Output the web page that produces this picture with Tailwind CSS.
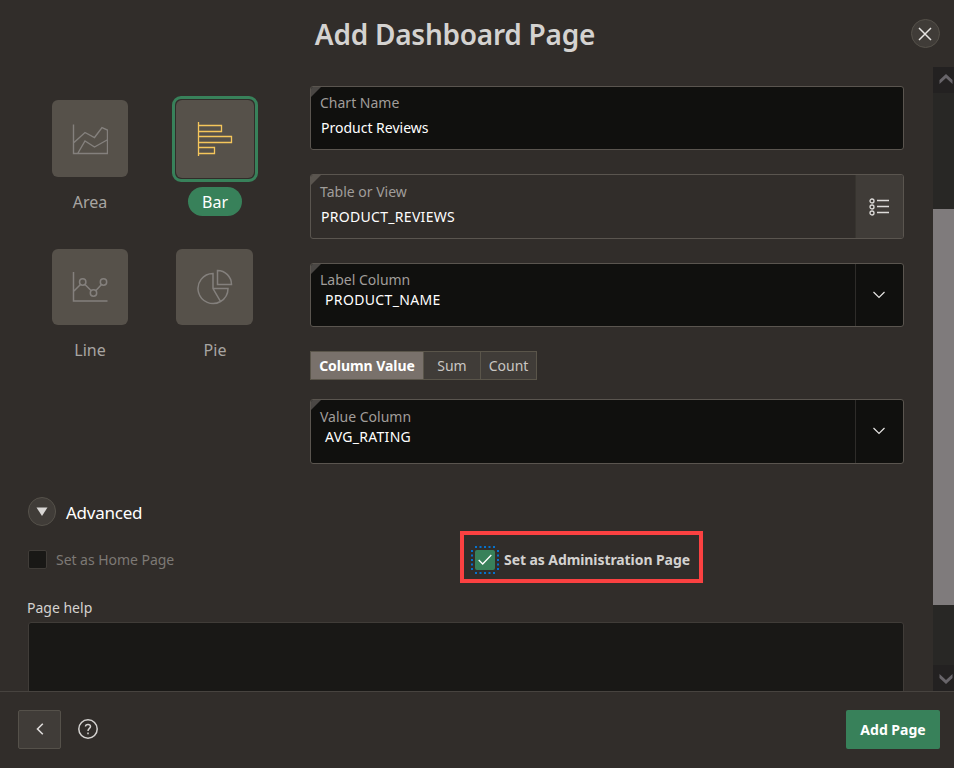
<!DOCTYPE html>
<html lang="en">
<head>
<meta charset="utf-8">
<title>Add Dashboard Page</title>
<script src="https://cdn.jsdelivr.net/npm/@tailwindcss/browser@4"></script>
</head>
<body class="w-[954px] h-[768px] overflow-hidden flex flex-col bg-[#312d2a] font-['Noto_Sans','Open_Sans',sans-serif] text-[14px] text-[#d4d2d0]">
<header class="h-[67px] shrink-0 relative flex justify-center pt-[14px] pr-[44px]">
  <h1 class="text-[28px] leading-[41px] font-semibold tracking-[-0.25px] text-[#d4d2d0] whitespace-nowrap">Add Dashboard Page</h1>
  <button class="absolute left-[911px] top-[19px] w-[29px] h-[29px] rounded-full border border-[#55514a] bg-[#403c38] flex items-center justify-center pr-px">
    <svg width="14" height="14" viewBox="0 0 14 14" fill="none" stroke="#e6e4e2" stroke-width="1.5"><path d="M1 1L13 13M13 1L1 13"/></svg>
  </button>
</header>
<div class="h-[624px] shrink-0 flex">
  <main class="w-[933px] overflow-hidden">
    <div class="flex pt-[19px] h-[397px]">
      <section class="w-[310px] shrink-0 pl-[48px] pt-[10px] grid grid-cols-[84px_86px] gap-x-[40px] auto-rows-[148.5px] content-start text-[16px] text-[#a8a5a2]">
        <div class="flex flex-col items-center">
          <div class="mt-[4px] w-[76px] h-[77px] rounded-[6px] bg-[#56514a] flex items-center justify-center">
            <svg width="36" height="36" viewBox="0 0 36 36" fill="none" stroke="#84807d" stroke-width="1.4"><path d="M1.5 3.500V32.500H35.500V9L30 6.500L22.500 16.500L13 11.500L2 21.500M6 32L13 20L22.500 26L35 19"/></svg>
          </div>
          <span class="mt-[11px] leading-[29px]">Area</span>
        </div>
        <div class="flex flex-col items-center">
          <div class="w-[86px] h-[86px] rounded-[9px] border-[3px] border-[#38815a] p-px flex">
            <div class="flex-1 rounded-[6px] bg-[#56514a] flex items-center justify-center">
              <svg width="36" height="36" viewBox="0 0 36 36" fill="none" stroke="#f5c65b" stroke-width="1.3"><path d="M1.500 1V35M1.500 4.500H24.500V10.500H1.500M1.500 15.500H34.500V21.500H1.500M1.500 26.500H17.500V32.500H1.500"/></svg>
            </div>
          </div>
          <span class="mt-[5px] w-[54px] h-[29px] leading-[30px] rounded-full bg-[#38815a] text-white text-center">Bar</span>
        </div>
        <div class="flex flex-col items-center">
          <div class="mt-[4px] w-[76px] h-[76px] rounded-[6px] bg-[#56514a] flex items-center justify-center">
            <svg width="36" height="36" viewBox="0 0 36 36" fill="none" stroke="#84807d" stroke-width="1.5"><path d="M1.500 3V32H35.500M2 22L8.500 15.500M13 15.500L19.500 22M23.500 22L29.500 15.500"/><circle cx="10.700" cy="13" r="3.200"/><circle cx="21.500" cy="24" r="3.200"/><circle cx="31.500" cy="13" r="3.200"/></svg>
          </div>
          <span class="mt-[11px] leading-[29px]">Line</span>
        </div>
        <div class="flex flex-col items-center">
          <div class="mt-[4px] mr-px w-[77px] h-[76px] rounded-[6px] bg-[#56514a] flex items-center justify-center">
            <svg width="36" height="36" viewBox="0 0 36 36" fill="none" stroke="#84807d" stroke-width="1.5"><path d="M16 4.500A15 15 0 1 0 23.500 32.500L16 19.500ZM16 19.500H31A15 15 0 0 1 23.500 32.500M20.500 1.500V15.500H34.500A14 14 0 0 0 20.500 1.500Z"/></svg>
          </div>
          <span class="mt-[11px] leading-[29px]">Pie</span>
        </div>
      </section>
      <section class="w-[594px] shrink-0 flex flex-col">
        <div class="h-[64px] rounded-[3px] border border-[#5a554f] bg-[#10100e] relative overflow-hidden pl-[9px] pt-[6px]">
          <i class="absolute left-0 top-0 border-t-[10px] border-r-[10px] border-t-[#4a4744] border-r-transparent"></i>
          <div class="leading-[20px] text-[#a09d9a]">Chart Name</div>
          <div class="mt-[5px] leading-[19px] pl-px text-white">Product Reviews</div>
        </div>
        <div class="mt-[24px] h-[65px] rounded-[3px] border border-[#5a554f] relative overflow-hidden flex">
          <i class="absolute left-0 top-0 border-t-[10px] border-r-[10px] border-t-[#5a554f] border-r-transparent"></i>
          <div class="flex-1 pl-[9px] pt-[7px]">
            <div class="leading-[20px] text-[#a09d9a]">Table or View</div>
            <div class="mt-[5px] leading-[19px] pl-px tracking-[0.3px] text-white">PRODUCT_REVIEWS</div>
          </div>
          <div class="w-[48px] bg-[#403c38] border-l border-[#37342f] flex items-center justify-center pr-px">
            <svg width="22" height="20" viewBox="0 0 22 20" fill="none" stroke="#dddbd9" stroke-width="1.300"><circle cx="4" cy="4" r="2"/><circle cx="4" cy="10" r="2"/><circle cx="4" cy="16" r="2"/><path d="M9 3.500H21M9 9.500H21M9 15.500H21"/></svg>
          </div>
        </div>
        <div class="mt-[24px] h-[64px] rounded-[3px] border border-[#5a554f] bg-[#10100e] relative overflow-hidden flex">
          <i class="absolute left-0 top-0 border-t-[10px] border-r-[10px] border-t-[#4a4744] border-r-transparent"></i>
          <div class="flex-1 pl-[9px] pt-[6px]">
            <div class="leading-[20px] text-[#a09d9a]">Label Column</div>
            <div class="leading-[20px] pl-[5px] tracking-[0.35px] text-white">PRODUCT_NAME</div>
          </div>
          <div class="w-[48px] border-l border-[#2e2c29] flex items-center justify-center pr-px">
            <svg width="14" height="8" viewBox="0 0 14 8" fill="none" stroke="#e6e4e2" stroke-width="1.200"><path d="M1.500 1L7 6.500L12.500 1"/></svg>
          </div>
        </div>
        <div class="mt-[24px] h-[29px] w-[227px] flex border border-[#5a554a] bg-[#403c38] leading-[28px] text-center text-[#c9c6c3]">
          <div class="w-[112px] bg-[#79716b] font-bold tracking-[-0.05px] text-white">Column Value</div>
          <div class="w-[57px] border-l border-[#5a554a]">Sum</div>
          <div class="w-[56px] border-l border-[#5a554a]">Count</div>
        </div>
        <div class="mt-[19px] h-[65px] rounded-[3px] border border-[#5a554f] bg-[#10100e] relative overflow-hidden flex">
          <i class="absolute left-0 top-0 border-t-[10px] border-r-[10px] border-t-[#4a4744] border-r-transparent"></i>
          <div class="flex-1 pl-[9px] pt-[7px]">
            <div class="leading-[20px] text-[#a09d9a]">Value Column</div>
            <div class="leading-[20px] pl-[5px] tracking-[0.3px] text-white">AVG_RATING</div>
          </div>
          <div class="w-[48px] border-l border-[#2e2c29] flex items-center justify-center pr-px pb-px">
            <svg width="14" height="8" viewBox="0 0 14 8" fill="none" stroke="#e6e4e2" stroke-width="1.200"><path d="M1.500 1L7 6.500L12.500 1"/></svg>
          </div>
        </div>
      </section>
    </div>
    <div class="mt-[33px] ml-[28px] h-[29px] flex items-center">
      <button class="w-[28px] h-[29px] rounded-full border border-[#55514a] bg-[#403c38] flex items-center justify-center">
        <svg width="12" height="9" viewBox="0 0 12 9" fill="#d8d6d4"><path d="M0.500 0.500H11.500L6 9Z"/></svg>
      </button>
      <span class="ml-[10px] pt-[2px] text-[17px] leading-[29px] tracking-[-0.25px] text-white">Advanced</span>
    </div>
    <div class="ml-[28px] mt-[5px] h-[52px] flex items-center">
      <div class="w-[432px] flex items-center pt-[4px]">
        <span class="w-[19px] h-[19px] rounded-[2px] border border-[#403c38] bg-[#191816]"></span>
        <span class="ml-[9px] pt-[2px] leading-[20px] tracking-[-0.04px] text-[#7d7975]">Set as Home Page</span>
      </div>
      <div class="w-[243px] h-[52px] border-4 border-[#fb4141] flex items-center pl-[7px] pt-[5px]">
        <span class="w-[28px] h-[28px] relative flex items-center justify-center">
          <svg class="absolute inset-0" width="28" height="28" viewBox="0 0 28 28" fill="none" stroke="#0572ce" stroke-width="2" stroke-dasharray="2 2.500"><path d="M4 1H25M27 4V25M4 27H25M1 4V25"/></svg>
          <span class="w-[20px] h-[20px] rounded-[2px] bg-[#38815a] flex items-center justify-center">
            <svg width="14" height="11" viewBox="0 0 14 11" fill="none" stroke="#fff" stroke-width="1.300"><path d="M0.700 6L4.700 10L13.300 1"/></svg>
          </span>
        </span>
        <span class="ml-[5px] pt-px leading-[20px] font-bold tracking-[-0.08px] whitespace-nowrap">Set as Administration Page</span>
      </div>
    </div>
    <div class="ml-[27px] mt-[15px] h-[24px] leading-[20px]">Page help</div>
    <div class="ml-[28px] w-[876px] h-[100px] rounded-[3px] border border-[#403c38] bg-[#191816]"></div>
  </main>
  <aside class="w-[21px] bg-[#282725] flex flex-col">
    <div class="h-[26px] bg-[#232121] pl-[6px] pt-[6px]"><svg width="14" height="12" viewBox="0 0 14 12" fill="#68656a"><path d="M0.500 7L7 1L13.500 7V11L7 5L0.500 11Z"/></svg></div>
    <div class="mt-[116px] h-[396px] bg-[#7f7b7c]"></div>
    <div class="mt-[60px] h-[26px] bg-[#232121] pl-[6px] pt-[8px]"><svg width="14" height="12" viewBox="0 0 14 12" fill="#68656a"><path d="M0.500 1V5L7 11L13.500 5V1L7 7Z"/></svg></div>
  </aside>
</div>
<footer class="h-[77px] shrink-0 border-t border-[#47433f] flex items-start pl-[18px] pt-[18px] pr-[14px]">
  <button class="w-[43px] h-[39px] rounded-[2px] border border-[#55514a] bg-[#403c38] flex items-center justify-center pb-px">
    <svg width="8" height="12" viewBox="0 0 8 12" fill="none" stroke="#dddbd9" stroke-width="1.600"><path d="M6.800 0.700L1.500 6L6.800 11.300"/></svg>
  </button>
  <svg class="ml-[17px] mt-[9px]" width="20" height="20" viewBox="0 0 20 20" fill="none" stroke="#d4d2d0" stroke-width="1.500"><circle cx="10" cy="10" r="9.200"/><path d="M7.500 7.600C7.500 4.600 12.500 4.700 12.500 7.600C12.500 9.500 10 9.300 10 12M10 13.500V15.200"/></svg>
  <button class="ml-auto w-[94px] h-[39px] rounded-[2px] bg-[#38815a] text-white font-bold leading-[40px]">Add Page</button>
</footer>
</body>
</html>
